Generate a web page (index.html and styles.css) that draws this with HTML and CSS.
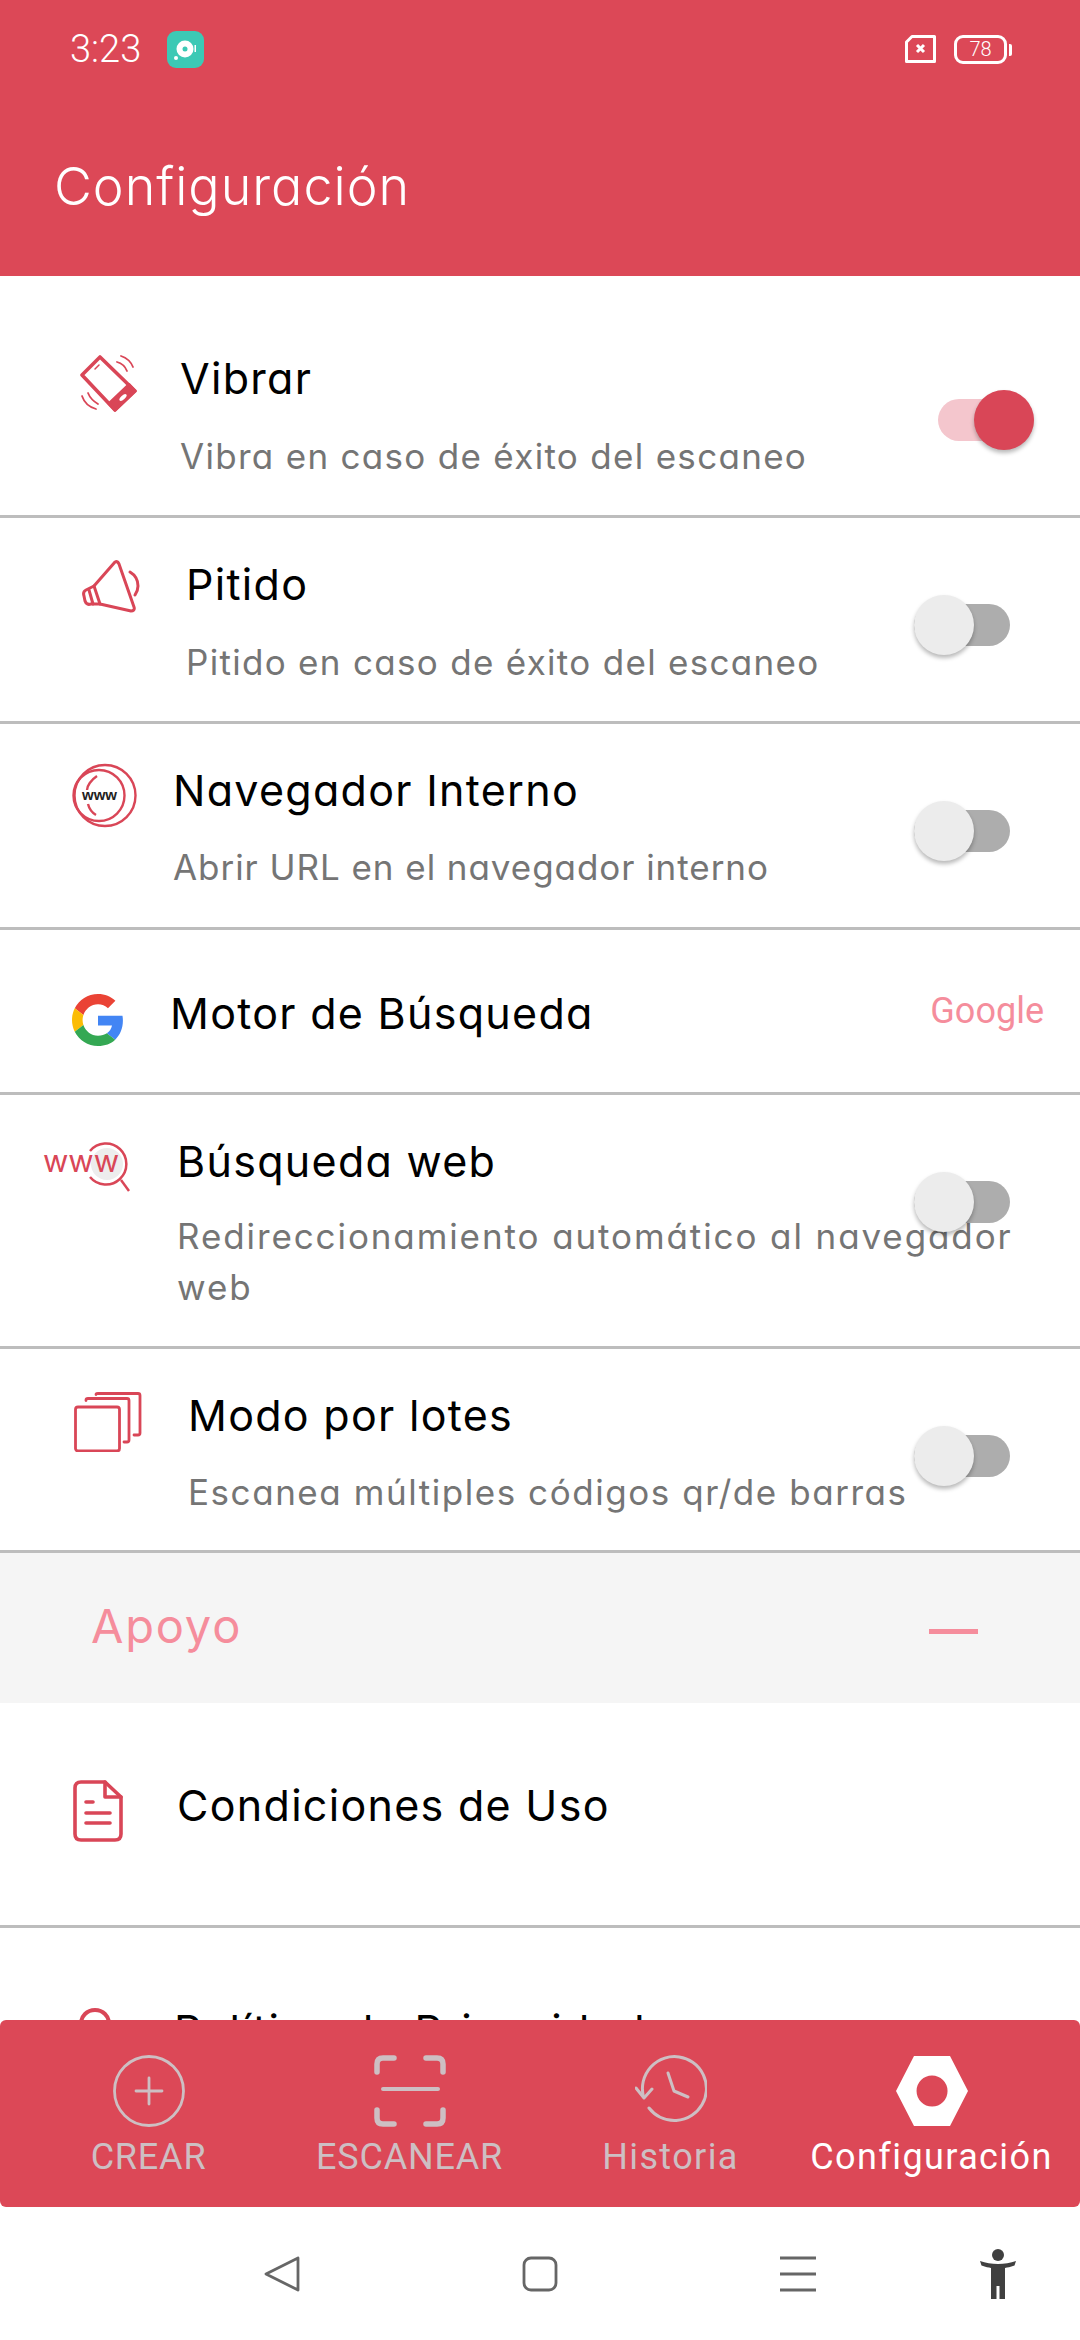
FILE: index.html
```html
<!DOCTYPE html>
<html lang="es">
<head>
<meta charset="utf-8">
<title>Configuración</title>
<link rel="stylesheet" href="styles.css">
</head>
<body>
<div class="screen">
  <header class="appbar">
    <div class="status">
      <span class="time">3:23</span>
      <svg class="app-badge" viewBox="0 0 37 37"><rect width="37" height="37" rx="9" fill="#3cc9b5"/><circle cx="18" cy="18" r="8.5" fill="#fff"/><circle cx="18" cy="18" r="2.5" fill="#3cc9b5"/><circle cx="9" cy="27" r="2" fill="#fff"/><rect x="27.500" y="14" width="1.500" height="7" fill="#fff"/></svg>
      <svg class="sim" viewBox="0 0 31 28"><path d="M7 1.500H29.500V26.500H1.500V7Z" fill="none" stroke="#fff" stroke-width="3" stroke-linejoin="round"/><path d="M12 10L19 17M19 10L12 17" stroke="#fff" stroke-width="3"/></svg>
      <div class="battery"><span class="battery-num">78</span></div>
    </div>
    <h1 class="page-title">Configuración</h1>
  </header>

  <main class="content">
    <section class="row row-vibrar">
      <div class="slot">
        <svg class="ico" width="57" height="57" viewBox="0 0 57 57" fill="none" stroke="#d94657" stroke-linecap="round" stroke-linejoin="round"><path d="M20 2L2 20L35 55L55 36Z" stroke-width="3.600"/><path d="M29 48.500L49 29.500L55 36L35 55Z" fill="#d94657" stroke-width="3"/><path d="M15 14L19 10" stroke-width="1.500"/><path d="M41 1C47 3 51 7 53 12M37 7C41 8 45 11 47 16" stroke-width="1.800"/><path d="M2 41C4 47 9 52 16 54M8 38C10 43 13 46 18 49" stroke-width="1.800"/><ellipse cx="43" cy="42.500" rx="4.500" ry="2" transform="rotate(-42 43 42.500)" fill="#fff" stroke="none"/></svg>
      </div>
      <div class="text">
        <h2 class="title">Vibrar</h2>
        <p class="sub">Vibra en caso de éxito del escaneo</p>
      </div>
      <div class="toggle toggle-on"><span class="track"></span><span class="thumb"></span></div>
    </section>

    <section class="row row-pitido">
      <div class="slot">
        <svg class="ico" width="58" height="53" viewBox="0 0 58 53" fill="none" stroke="#d94657" stroke-width="3" stroke-linecap="round" stroke-linejoin="round"><path d="M33 2C35 1 36 2 37 4L52 47C53 50 51 51 49 51L18 44L12 26Z"/><path d="M12 26L4 30C2 31 1 33 2 36L3 41C4 44 6 45 9 44L18 44"/><path d="M7 30L11 44"/><path d="M48 12C53 15 56 20 56 26C56 29 55 32 53 35"/></svg>
      </div>
      <div class="text">
        <h2 class="title">Pitido</h2>
        <p class="sub">Pitido en caso de éxito del escaneo</p>
      </div>
      <div class="toggle"><span class="track"></span><span class="thumb"></span></div>
    </section>

    <section class="row row-nav">
      <div class="slot">
        <svg class="ico" width="65" height="65" viewBox="0 0 65 65" fill="none" stroke="#d94657" stroke-width="2.400"><circle cx="33" cy="32.500" r="30.500"/><circle cx="27" cy="32.500" r="25.500"/><path d="M25 13C19 17 15 23 15 27M24 52C19 49 17 45 16 41"/><text class="www-small" x="10" y="37" stroke="none">www</text></svg>
      </div>
      <div class="text">
        <h2 class="title">Navegador Interno</h2>
        <p class="sub">Abrir URL en el navegador interno</p>
      </div>
      <div class="toggle"><span class="track"></span><span class="thumb"></span></div>
    </section>

    <section class="row row-motor">
      <div class="slot">
        <svg class="ico" width="52" height="52" viewBox="0 0 48 48"><path fill="#EA4335" d="M24 9.500c3.540 0 6.710 1.220 9.210 3.600l6.850-6.850C35.900 2.380 30.470 0 24 0 14.620 0 6.510 5.380 2.560 13.220l7.980 6.190C12.430 13.720 17.740 9.500 24 9.500z"/><path fill="#4285F4" d="M46.980 24.550c0-1.570-.15-3.090-.38-4.550H24v9.020h12.940c-.58 2.960-2.260 5.480-4.780 7.180l7.730 6c4.510-4.180 7.090-10.360 7.090-17.650z"/><path fill="#FBBC05" d="M10.530 28.590c-.48-1.450-.76-2.990-.76-4.590s.27-3.140.76-4.590l-7.980-6.190C.92 16.460 0 20.120 0 24c0 3.880.92 7.540 2.560 10.780l7.970-6.190z"/><path fill="#34A853" d="M24 48c6.480 0 11.930-2.130 15.890-5.810l-7.730-6c-2.150 1.450-4.920 2.300-8.160 2.300-6.260 0-11.570-4.220-13.470-9.910l-7.980 6.190C6.510 42.620 14.620 48 24 48z"/></svg>
      </div>
      <div class="text">
        <h2 class="title">Motor de Búsqueda</h2>
      </div>
      <span class="value">Google</span>
    </section>

    <section class="row row-web">
      <div class="slot">
        <svg class="ico" width="88" height="52" viewBox="0 0 88 52" fill="none" stroke="#d94657"><circle cx="64" cy="22" r="16" fill="#ededed" stroke="none"/><path d="M47 9A20.500 20.500 0 1 1 47 35" stroke-width="2.500"/><path d="M78 38L86 49" stroke-width="2.500"/><text class="www-big" x="0" y="30" stroke="none">www</text></svg>
      </div>
      <div class="text">
        <h2 class="title">Búsqueda web</h2>
        <p class="sub">Redireccionamiento automático al navegador web</p>
      </div>
      <div class="toggle"><span class="track"></span><span class="thumb"></span></div>
    </section>

    <section class="row row-lotes">
      <div class="slot">
        <svg class="ico" width="68" height="60" viewBox="0 0 68 60" fill="none" stroke="#d94657" stroke-width="2.800" stroke-linejoin="round" stroke-linecap="round"><rect x="1.500" y="15" width="44" height="44" rx="2.500"/><path d="M12 8.500V8C12 7 13 6.500 14 6.500H53C54 6.500 55 7 55 8.500V48C55 49.500 54 50 53 50H50"/><path d="M22 2.500C22 1.500 23 1.500 24 1.500H64C65.500 1.500 66 2 66 3.500V41C66 42.500 65.500 43 64 43H60"/></svg>
      </div>
      <div class="text">
        <h2 class="title">Modo por lotes</h2>
        <p class="sub">Escanea múltiples códigos qr/de barras</p>
      </div>
      <div class="toggle"><span class="track"></span><span class="thumb"></span></div>
    </section>

    <section class="section-head">
      <span class="section-title">Apoyo</span>
      <span class="minus"></span>
    </section>

    <section class="row row-cond">
      <div class="slot">
        <svg class="ico" width="50" height="62" viewBox="0 0 50 62" fill="none" stroke="#d94657" stroke-linecap="round" stroke-linejoin="round"><path d="M32 2H8C4 2 2 4 2 8V54C2 58 4 60 8 60H42C46 60 48 58 48 54V17Z" stroke-width="3.600"/><path d="M32 2V17H48" stroke-width="3.600"/><path d="M13 22H20M13 33H37M13 43H37" stroke-width="3.600"/></svg>
      </div>
      <div class="text"><h2 class="title">Condiciones de Uso</h2></div>
    </section>

    <section class="row row-pol">
      <div class="slot">
        <svg class="ico" width="32" height="44" viewBox="0 0 32 44" fill="none" stroke="#d94657" stroke-width="4"><path d="M16 2C8 2 2 8 2 16C2 26 16 42 16 42C16 42 30 26 30 16C30 8 24 2 16 2Z"/></svg>
      </div>
      <div class="text"><h2 class="title">Política de Privacidad</h2></div>
    </section>
  </main>

  <nav class="tabs">
    <div class="tab">
      <svg class="tab-ico" viewBox="0 0 72 72" fill="none" stroke="currentColor" stroke-width="2.800" stroke-linecap="round"><circle cx="36" cy="36" r="34.500"/><path d="M36 23V49M23 36H49"/></svg>
      <span class="tab-label tab-caps">CREAR</span>
    </div>
    <div class="tab">
      <svg class="tab-ico" viewBox="0 0 72 72" fill="none" stroke="currentColor" stroke-width="5.500" stroke-linecap="round"><path d="M20 3H9C5 3 3 5 3 9V17M52 3H63C67 3 69 5 69 9V17M20 69H9C5 69 3 67 3 63V55M52 69H63C67 69 69 67 69 63V55"/><path d="M9 34H64" stroke-width="4"/></svg>
      <span class="tab-label tab-caps">ESCANEAR</span>
    </div>
    <div class="tab">
      <svg class="tab-ico" viewBox="0 0 72 72" fill="none" stroke="currentColor" stroke-width="3" stroke-linecap="round" stroke-linejoin="round"><path d="M8.300 41A32 32 0 1 1 14 53"/><path d="M1 33L9 43L17 34"/><path d="M33 18L39 36L53 42"/></svg>
      <span class="tab-label">Historia</span>
    </div>
    <div class="tab tab-active">
      <svg class="tab-ico" viewBox="0 0 72 72"><path fill-rule="evenodd" fill="#fff" d="M18 1H54L72 36L54 71H18L0 36ZM36 20.500A15.500 15.500 0 1 0 36.100 51.500A15.500 15.500 0 1 0 36 20.500Z"/></svg>
      <span class="tab-label">Configuración</span>
    </div>
  </nav>

  <footer class="sysnav">
    <svg class="sys-ico" width="36" height="36" viewBox="0 0 36 36" fill="none" stroke="#666" stroke-width="2.800" stroke-linejoin="round"><path d="M34 2L2 18L34 34Z"/></svg>
    <svg class="sys-ico" width="36" height="36" viewBox="0 0 36 36" fill="none" stroke="#666" stroke-width="2.800"><rect x="2" y="2" width="32" height="32" rx="7"/></svg>
    <svg class="sys-ico" width="36" height="36" viewBox="0 0 36 36" fill="none" stroke="#666" stroke-width="3"><path d="M0 2H36M0 18H36M0 34H36"/></svg>
    <svg class="sys-ico" width="38" height="50" viewBox="0 0 38 50" fill="#404040"><circle cx="19" cy="6" r="6"/><path d="M1 12L2.500 16.500C7 18 9.500 18.500 12 19V50H17.500V37H20.500V50H26V19C28.500 18.500 31 18 35.500 16.500L37 12C26 16 12 16 1 12Z"/></svg>
  </footer>
</div>
</body>
</html>
```
FILE: styles.css
```css
* { box-sizing: border-box; }
html, body { margin: 0; padding: 0; background: #fff; }
body { width: 1080px; height: 2340px; overflow: hidden; font-family: Inter, "Noto Sans", sans-serif; font-feature-settings: "cv11"; }
h1, h2, p { margin: 0; font-weight: 400; }

.screen { width: 1080px; height: 2340px; display: flex; flex-direction: column; }

/* App bar */
.appbar { flex: 0 0 276px; background: #dc4857; color: #fff; }
.status { display: flex; align-items: center; height: 98px; padding-left: 70px; }
.time { font-family: Roboto, sans-serif; font-weight: 300; font-size: 38px; width: 97px; }
.app-badge { width: 37px; height: 37px; }
.sim { width: 31px; height: 28px; margin-left: 701px; }
.battery { position: relative; width: 53px; height: 29px; margin-left: 18px; border: 3px solid #fff; border-radius: 9px; display: flex; align-items: center; justify-content: center; }
.battery::after { content: ""; position: absolute; right: -8px; top: 6px; width: 3px; height: 12px; background: #fff; border-radius: 0 2px 2px 0; }
.battery-num { font-family: Roboto, sans-serif; font-weight: 300; font-size: 20px; line-height: 1; }
.page-title { padding: 59px 0 0 54px; font-size: 52px; line-height: 60px; font-weight: 350; letter-spacing: 1px; }

/* Rows */
.content { flex: 0 0 1744px; overflow: hidden; background: #fff; }
.row { position: relative; display: flex; align-items: flex-start; border-bottom: 3px solid #bdbdbd; }
.slot { flex: none; line-height: 0; }
.ico { display: block; }
.title { margin-top: -1px; font-size: 43px; line-height: 60px; color: #000; letter-spacing: 1.3px; white-space: nowrap; }
.sub { margin-top: 23px; font-size: 35px; line-height: 51px; color: #757575; letter-spacing: 1.3px; }
.text { flex: 1; min-width: 0; padding-right: 62px; }

.row-vibrar { height: 242px; }
.row-vibrar .slot { width: 180px; padding: 79px 0 0 80px; }
.row-vibrar .text { padding-top: 73px; }
.row-pitido { height: 206px; }
.row-pitido .slot { width: 186px; padding: 42px 0 0 82px; }
.row-pitido .text { padding-top: 37px; }
.row-nav { height: 206px; }
.row-nav .slot { width: 173px; padding: 39px 0 0 72px; }
.row-nav .text { padding-top: 37px; }
.row-nav .sub { letter-spacing: 0.95px; margin-top: 22px; }
.row-motor { height: 165px; }
.row-motor .slot { width: 170px; padding: 64px 0 0 72px; }
.row-motor .text { padding-top: 54px; }
.row-web { height: 254px; }
.row-web .slot { width: 177px; padding: 47px 0 0 43px; }
.row-web .text { padding-top: 37px; }
.row-web .sub { letter-spacing: 1.9px; margin-top: 20px; }
.row-lotes { height: 204px; }
.row-lotes .slot { width: 188px; padding: 43px 0 0 74px; }
.row-lotes .text { padding-top: 37px; }
.row-lotes .sub { letter-spacing: 1.55px; margin-top: 22px; }
.row-cond { height: 225px; }
.row-cond .slot { width: 177px; padding: 77px 0 0 73px; }
.row-cond .text { padding-top: 73px; }
.row-pol { height: 225px; border-bottom: 0; }
.row-pol .slot { width: 174px; padding: 80px 0 0 79px; }
.row-pol .text { padding-top: 73px; }

.value { flex: none; margin: 60px 36px 0 0; font-family: Roboto, sans-serif; font-size: 36px; line-height: 42px; color: #f58d9c; }

/* Toggles overlay the row text */
.toggle { position: absolute; top: 77px; right: 70px; width: 96px; height: 60px; }
.track { position: absolute; left: 0; top: 9px; width: 96px; height: 42px; border-radius: 21px; background: #adadad; }
.thumb { position: absolute; left: 0; top: 0; width: 60px; height: 60px; border-radius: 50%; background: #ececec; box-shadow: 0 3px 4px rgba(0, 0, 0, .28); }
.toggle-on { top: 114px; right: 46px; }
.toggle-on .track { background: #f4c6cd; }
.toggle-on .thumb { left: 36px; background: #d94657; }

/* Section header */
.section-head { height: 150px; background: #f5f5f5; display: flex; align-items: center; justify-content: space-between; padding: 0 102px 0 91px; }
.section-title { font-size: 47px; color: #f58d9c; letter-spacing: 1.8px; margin-top: -6px; }
.minus { width: 49px; height: 5px; background: #f58d9c; margin-top: 6px; }

/* Bottom tabs */
.tabs { flex: 0 0 187px; background: #dc4857; border-radius: 6px; display: grid; grid-template-columns: repeat(4, 1fr); padding: 0 18px; color: #cdbfc3; }
.tab { display: flex; flex-direction: column; align-items: center; padding-top: 35px; }
.tab-active { color: #fff; }
.tab-ico { width: 72px; height: 72px; display: block; }
.tab-label { font-family: Roboto, sans-serif; font-size: 36px; line-height: 40px; margin-top: 10px; letter-spacing: 1.4px; white-space: nowrap; }
.tab-caps { letter-spacing: 0.8px; }

/* System nav */
.sysnav { flex: 1; display: grid; grid-template-columns: 258px 258px 258px 142px; padding-left: 153px; align-items: center; justify-items: center; }

.www-small { font-family: "Liberation Sans", sans-serif; font-weight: 700; font-size: 15px; fill: #222; }
.www-big { font-family: Inter, sans-serif; font-feature-settings: normal; font-weight: 400; font-size: 31px; fill: #d94657; }
```
